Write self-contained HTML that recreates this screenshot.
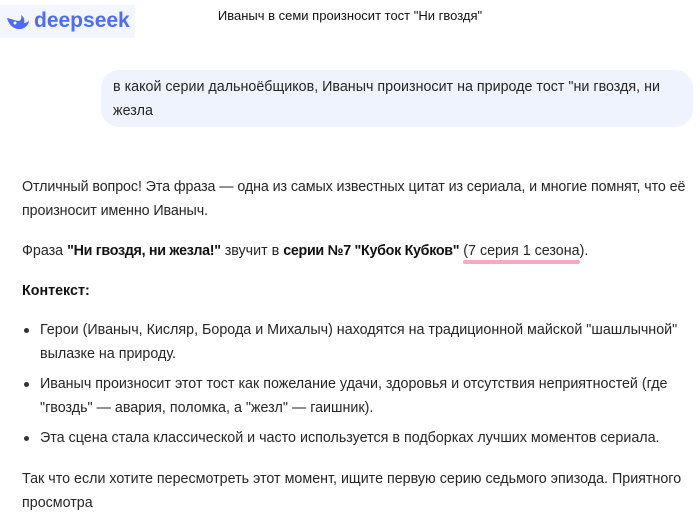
<!DOCTYPE html>
<html><head><meta charset="utf-8"><style>
body{margin:0;width:700px;height:517px;background:#fff;font-family:"Liberation Sans","DejaVu Sans",sans-serif;color:#262626;font-size:14.3px;overflow:hidden;position:relative}
.logo{position:absolute;left:0;top:5px;width:135px;height:33px;background:#f3f6fd}
.logo span{position:absolute;left:34px;top:4px;font-size:21px;font-weight:bold;color:#4d6bfe;letter-spacing:0px}
.title{position:absolute;left:0;width:700px;top:8px;text-align:center;font-size:13px;color:#111}
.bubble{position:absolute;left:101px;top:70px;width:568px;height:47px;padding:5px 12px 5px 12px;background:#eef3fd;border-radius:18px;line-height:24px}
.p{position:absolute;left:22px;line-height:24px;width:672px}
b{color:#111}
.li{position:absolute;left:40px;line-height:24px;width:652px}
.li:before{content:"";position:absolute;left:-16px;top:10px;width:5px;height:5px;border-radius:50%;background:#333}
.u{position:relative}
.u:after{content:"";position:absolute;left:0;right:0;bottom:-5px;height:4px;border-radius:2px;background:#f4a9c7}
</style></head><body>
<div class="logo"><svg style="position:absolute;left:6px;top:8px" width="25" height="18" viewBox="0 0 25 18"><path d="M1 5c2 8 8 12 14 11 5-1 8-5 8-9-1 2-3 3-5 3 1-3 0-6-3-8 1 3 0 5-2 6C10 8 6 6 1 5z" fill="#4d6bfe"/><circle cx="9" cy="10" r="1.5" fill="#fff"/></svg><span>deepseek</span></div>
<div class="title">Иваныч в семи произносит тост "Ни гвоздя"</div>
<div class="bubble">в какой серии дальноёбщиков, Иваныч произносит на природе тост "ни гвоздя, ни жезла</div>
<div class="p" style="top:175px;letter-spacing:-0.1px">Отличный вопрос! Эта фраза — одна из самых известных цитат из сериала, и многие помнят, что её произносит именно Иваныч.</div>
<div class="p" style="top:239px">Фраза <b style="letter-spacing:-0.3px">"Ни гвоздя, ни жезла!"</b> звучит в <b style="letter-spacing:-0.3px">серии №7 "Кубок Кубков"</b> <span class="u">(7 серия 1 сезона</span>).</div>
<div class="p" style="top:279px"><b>Контекст:</b></div>
<div class="li" style="top:318px">Герои (Иваныч, Кисляр, Борода и Михалыч) находятся на традиционной майской "шашлычной" вылазке на природу.</div>
<div class="li" style="top:372px">Иваныч произносит этот тост как пожелание удачи, здоровья и отсутствия неприятностей (где "гвоздь" — авария, поломка, а "жезл" — гаишник).</div>
<div class="li" style="top:426px">Эта сцена стала классической и часто используется в подборках лучших моментов сериала.</div>
<div class="p" style="top:467px">Так что если хотите пересмотреть этот момент, ищите первую серию седьмого эпизода. Приятного просмотра</div>
</body></html>
